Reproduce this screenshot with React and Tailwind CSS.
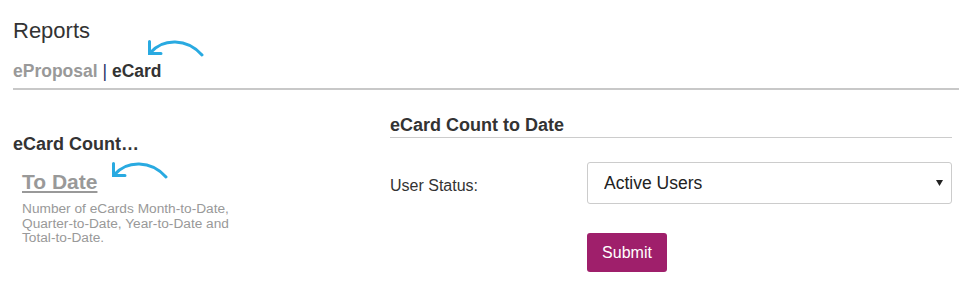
import React from 'react'

// little hand-drawn "look here" arrow used twice on the page
const CurlArrow = ({ className }) => (
  <svg className={className} width="58" height="18" viewBox="0 0 58 18" fill="none">
    <path
      d="M3 14 C 16 -1, 40 -1, 55 16"
      stroke="#29aae1"
      strokeWidth="3"
      strokeLinecap="round"
    />
    <path
      d="M2.5 2.5 L2.5 14.5 L14 14.5"
      stroke="#29aae1"
      strokeWidth="3"
      strokeLinecap="round"
      strokeLinejoin="miter"
    />
  </svg>
)

const App = () => {
  return (
    <div className="relative min-h-[286px] bg-white pl-[13px] font-['Liberation_Sans',Arial,sans-serif] text-[#333]">
      <h1 className="pt-[18px] text-[22px] leading-[26px] font-normal">Reports</h1>
      <div className="mt-[17px] border-b-2 border-[#c8c8c8] pb-[7px] text-[17.5px] font-bold leading-[20px]">
        <span className="text-[#999]">eProposal</span>
        <span className="font-normal text-[#2b3466]"> | </span>
        <span className="text-[#333]">eCard</span>
      </div>

      <div className="flex">
        {/* left: report list */}
        <div className="w-[377px] shrink-0 pt-[44px]">
          <h2 className="text-[18px] font-bold leading-[20px]">eCard Count…</h2>
          <a
            href="#"
            className="ml-[9px] mt-[16px] inline-block text-[21px] font-bold leading-[24px] text-[#999] underline decoration-2 underline-offset-2"
          >
            To Date
          </a>
          <p className="ml-[9px] mt-[6px] w-[240px] text-[13.7px] leading-[14.5px] text-[#999]">
            Number of eCards Month-to-Date, Quarter-to-Date, Year-to-Date and Total-to-Date.
          </p>
        </div>

        {/* right: report form */}
        <div className="mr-[7px] flex-1 pt-[25px]">
          <h3 className="border-b border-[#ccc] pb-[2px] text-[18px] font-bold leading-[20px]">
            eCard Count to Date
          </h3>
          <div className="mt-[24px] flex items-start">
            <label className="mt-[15px] w-[197px] shrink-0 text-[16px] leading-[18px] text-[#333]">
              User Status:
            </label>
            <div className="relative flex-1">
              <select
                defaultValue="active"
                className="h-[42px] w-full appearance-none rounded-[3px] border border-[#ccc] bg-white pl-[16px] text-[17.5px] text-[#222] outline-none"
              >
                <option value="active">Active Users</option>
                <option value="inactive">Inactive Users</option>
                <option value="all">All Users</option>
              </select>
              <svg
                className="pointer-events-none absolute right-[9px] top-[18px]"
                width="7"
                height="6"
                viewBox="0 0 7 6"
              >
                <path d="M0 0 L7 0 L3.5 6 Z" fill="#222" />
              </svg>
            </div>
          </div>
          <div className="mt-[29px] pl-[197px]">
            <button
              type="button"
              className="h-[39px] w-[80px] rounded-[3px] bg-[#9f1f6b] text-[16px] text-white"
            >
              Submit
            </button>
          </div>
        </div>
      </div>

      <CurlArrow className="absolute left-[147px] top-[39px]" />
      <CurlArrow className="absolute left-[111px] top-[161px]" />
    </div>
  )
}

export default App
